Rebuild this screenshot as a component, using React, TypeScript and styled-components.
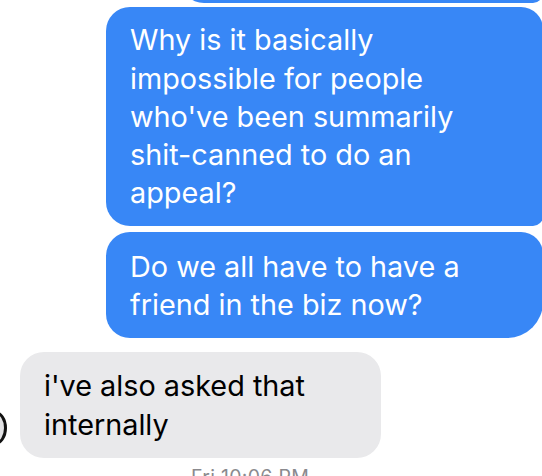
import React from "react";
import styled, { createGlobalStyle } from "styled-components";

const Global = createGlobalStyle`
  html, body { margin: 0; padding: 0; background: #ffffff; }
  body { width: 542px; height: 476px; overflow: hidden; }
`;

const Screen = styled.div`
  width: 542px;
  height: 476px;
  overflow: hidden;
  display: flex;
  flex-direction: column;
  font-family: Inter, "Noto Sans", sans-serif;
  -webkit-font-smoothing: antialiased;
`;

const Thread = styled.div`
  display: flex;
  flex-direction: column;
  margin-top: -62px;
`;

const OutRow = styled.div<{ $gap: number }>`
  display: flex;
  justify-content: flex-end;
  margin-top: ${(p) => p.$gap}px;
  margin-right: -1px;
`;

const OutBubble = styled.div<{ $left: number; $tail?: boolean }>`
  margin-left: ${(p) => p.$left}px;
  flex: 1;
  background: #3887f6;
  color: #ffffff;
  font-size: 28.8px;
  line-height: 38.3px;
  padding: ${(p) => (p.$tail ? "16px 24px 14px 24px" : "14px 24px 13px 24px")};
  border-radius: ${(p) => (p.$tail ? "24px 22px 36px 24px" : "24px 22px 10px 24px")};
`;

const InRow = styled.div`
  display: flex;
  align-items: flex-end;
  margin-top: 14px;
`;

const Avatar = styled.div`
  box-sizing: border-box;
  width: 24px;
  height: 34px;
  margin-left: -17px;
  margin-right: 13px;
  margin-bottom: 13px;
  border: 3.5px solid #111111;
  border-radius: 50%;
  background: #e2e2e4;
  flex-shrink: 0;
`;

const InBubble = styled.div`
  width: 313px;
  background: #e9e9eb;
  color: #000000;
  font-size: 28.8px;
  line-height: 38.3px;
  padding: 15px 24px 14px 24px;
  border-radius: 24px;
`;

const Stamp = styled.div`
  margin-top: 8px;
  padding-left: 191px;
  color: #8a8a8e;
  font-size: 19.5px;
  line-height: 23px;
  letter-spacing: 0.3px;
`;

export default function App() {
  return (
    <Screen>
      <Global />
      <Thread>
        <OutRow $gap={0}>
          <OutBubble $left={180}>&nbsp;</OutBubble>
        </OutRow>
        <OutRow $gap={4}>
          <OutBubble $left={106}>
            Why is it basically
            <br />
            impossible for people
            <br />
            who've been summarily
            <br />
            shit-canned to do an
            <br />
            appeal?
          </OutBubble>
        </OutRow>
        <OutRow $gap={6}>
          <OutBubble $left={106} $tail>
            Do we all have to have a
            <br />
            friend in the biz now?
          </OutBubble>
        </OutRow>
        <InRow>
          <Avatar />
          <InBubble>
            i've also asked that
            <br />
            internally
          </InBubble>
        </InRow>
        <Stamp>Fri 10:06 PM</Stamp>
      </Thread>
    </Screen>
  );
}
